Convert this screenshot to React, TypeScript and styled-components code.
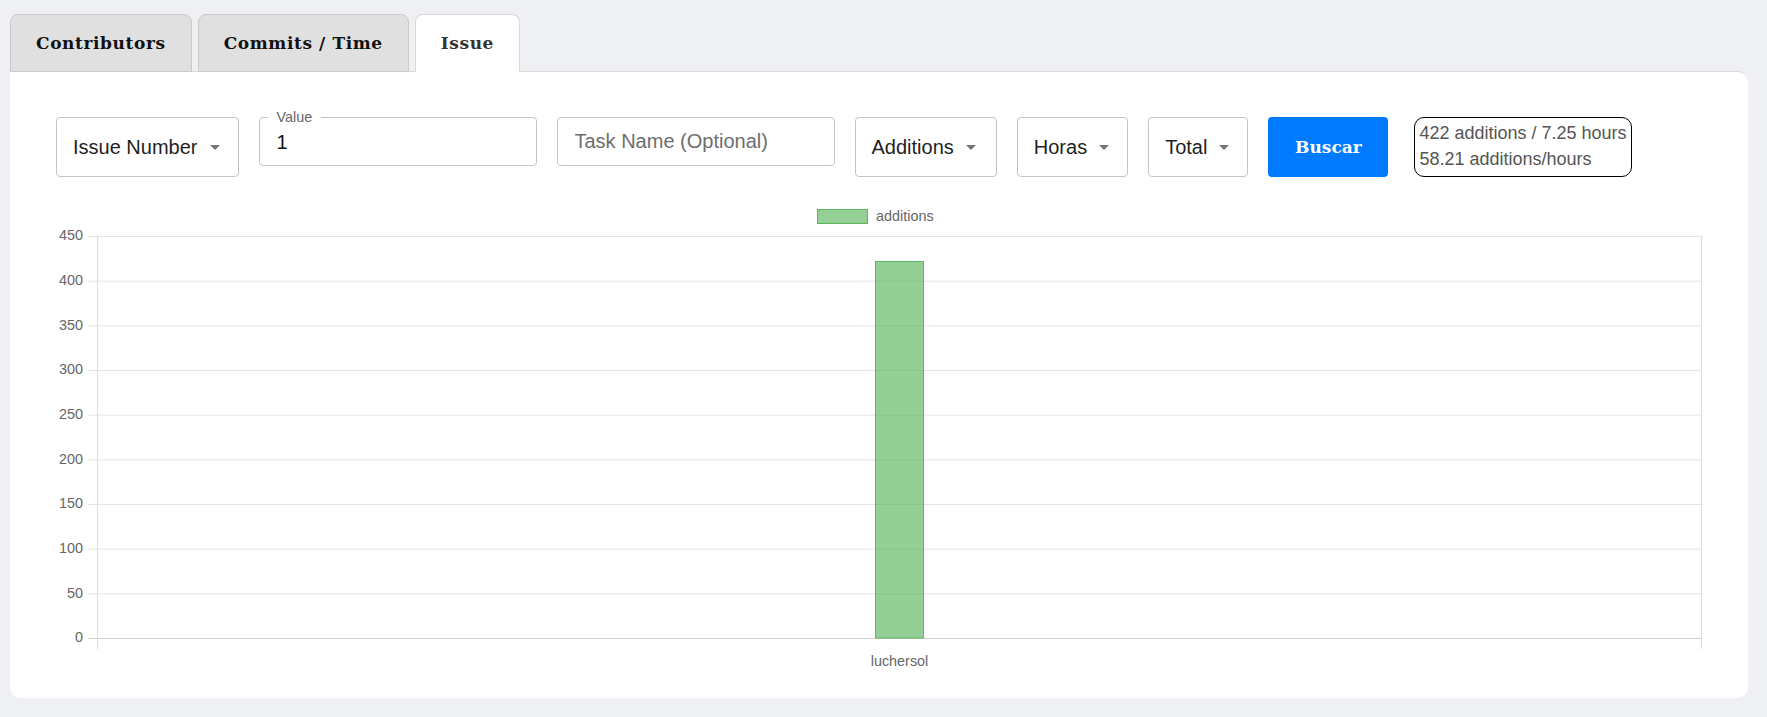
import React from "react";
import styled, { createGlobalStyle, css } from "styled-components";

const GlobalStyle = createGlobalStyle`
  html, body { margin: 0; padding: 0; }
  body {
    background: #eff0f4;
    font-family: "Liberation Sans", Arial, sans-serif;
  }
`;

const Page = styled.div`
  padding: 14px 19px 19px 10px;
`;

const TabList = styled.div`
  display: flex;
  align-items: flex-end;
  gap: 6px;
`;

const Tab = styled.button<{ $active?: boolean }>`
  height: 58px;
  padding: 0 25px;
  margin-bottom: -1px;
  border: 1px solid #c9c9c9;
  border-radius: 8px 8px 0 0;
  background: #e0e0e0;
  color: #111;
  font-family: "DejaVu Serif", "Liberation Serif", serif;
  font-weight: 700;
  font-size: 17px;
  letter-spacing: 0.6px;
  cursor: pointer;
  position: relative;
  ${(p) =>
    p.$active &&
    css`
      background: #fff;
      border-color: #d9d9d9;
      border-bottom-color: #fff;
      color: #333;
      z-index: 1;
    `}
`;

const Card = styled.div`
  background: #fff;
  border-top: 1px solid #d9d9d9;
  border-radius: 0 10px 10px 10px;
  padding: 45px 46px 23px 46px;
`;

const Controls = styled.div`
  display: flex;
  align-items: flex-start;
  gap: 20px;
`;

const SelectBox = styled.div<{ $extra?: number }>`
  height: 60px;
  box-sizing: border-box;
  display: flex;
  align-items: center;
  gap: 12px;
  padding: 0 ${(p) => 18 + (p.$extra ?? 0)}px 0 16px;
  border: 1px solid #c4c4c4;
  border-radius: 4px;
  font-size: 20px;
  color: #1f1f1f;
  white-space: nowrap;
`;

const Arrow = styled.span`
  width: 0;
  height: 0;
  border-left: 5px solid transparent;
  border-right: 5px solid transparent;
  border-top: 5px solid #757575;
`;

const Field = styled.fieldset`
  margin: -7px 0 0 0;
  width: 278px;
  height: 56px;
  box-sizing: border-box;
  padding: 0 17px 5px 17px;
  border: 1px solid #c4c4c4;
  border-radius: 4px;
  display: flex;
  align-items: center;
`;

const FieldLegend = styled.legend`
  margin-left: -9px;
  padding: 0 9px;
  font-size: 14.4px;
  line-height: 14px;
  color: #666;
`;

const TextInput = styled.input`
  box-sizing: border-box;
  border: none;
  outline: none;
  padding: 0;
  margin: 0;
  width: 100%;
  font-family: "Liberation Sans", Arial, sans-serif;
  font-size: 20px;
  color: #111;
  background: transparent;
`;

const PlainInput = styled.input`
  box-sizing: border-box;
  width: 278px;
  height: 49px;
  padding: 0 17px;
  border: 1px solid #c4c4c4;
  border-radius: 4px;
  outline: none;
  font-family: "Liberation Sans", Arial, sans-serif;
  font-size: 20px;
  color: #111;
  &::placeholder {
    color: #6e6e6e;
  }
`;

const SearchButton = styled.button`
  width: 120px;
  height: 60px;
  border: none;
  border-radius: 4px;
  background: #007bff;
  color: #fff;
  font-family: "DejaVu Serif", "Liberation Serif", serif;
  font-weight: 700;
  font-size: 17px;
  cursor: pointer;
`;

const InfoBox = styled.div`
  margin-left: 6px;
  height: 60px;
  box-sizing: border-box;
  padding: 2px 4px 0 4px;
  border: 1px solid #000;
  border-radius: 10px;
  font-size: 18px;
  line-height: 26px;
  color: #555;
  white-space: nowrap;
`;

const ChartWrap = styled.div`
  margin-top: 20px;
  height: 478px;
`;

const Select: React.FC<{ label: string; extra?: number }> = ({ label, extra }) => (
  <SelectBox $extra={extra}>
    <span>{label}</span>
    <Arrow />
  </SelectBox>
);

const W = 1646;
const left = 41;
const top = 39;
const zeroY = 441;
const maxV = 450;
const yOf = (v: number) => zeroY - (v * (zeroY - top)) / maxV;

const BarChart: React.FC = () => {
  const ticks = [0, 50, 100, 150, 200, 250, 300, 350, 400, 450];
  const value = 422;
  const barX = 819;
  const barW = 49;
  const labelFont = "Liberation Sans, Arial, sans-serif";
  return (
    <svg width={W} height={478} viewBox={`0 0 ${W} 478`}>
      <rect x={761.5} y={12.5} width={50} height={14} fill="rgba(76,175,80,0.6)" stroke="#5cb85c" strokeWidth={1} />
      <text x={820} y={24} fontFamily={labelFont} fontSize={14.4} fill="#666">
        additions
      </text>
      {ticks.map((t) => (
        <g key={t}>
          <line
            x1={32}
            x2={W}
            y1={yOf(t) + 0.5}
            y2={yOf(t) + 0.5}
            stroke={t === 0 ? "#cfcfcf" : "#e4e4e4"}
            strokeWidth={1}
          />
          <text
            x={27}
            y={yOf(t) + 0.5}
            textAnchor="end"
            dominantBaseline="middle"
            fontFamily={labelFont}
            fontSize={14.4}
            fill="#666"
          >
            {t}
          </text>
        </g>
      ))}
      <line x1={left + 0.5} x2={left + 0.5} y1={top} y2={452} stroke="#dcdcdc" strokeWidth={1} />
      <line x1={W - 0.5} x2={W - 0.5} y1={top} y2={452} stroke="#dcdcdc" strokeWidth={1} />
      <rect
        x={barX + 0.5}
        y={yOf(value) + 0.5}
        width={barW - 1}
        height={zeroY - yOf(value) - 0.5}
        fill="rgba(76,175,80,0.6)"
        stroke="#5cb85c"
        strokeWidth={1}
      />
      <text
        x={843.5}
        y={465}
        textAnchor="middle"
        dominantBaseline="middle"
        fontFamily={labelFont}
        fontSize={14.4}
        fill="#666"
      >
        luchersol
      </text>
    </svg>
  );
};

export default function App() {
  return (
    <>
      <GlobalStyle />
      <Page>
        <TabList>
          <Tab>Contributors</Tab>
          <Tab>Commits / Time</Tab>
          <Tab $active>Issue</Tab>
        </TabList>
        <Card>
          <Controls>
            <Select label="Issue Number" />
            <Field>
              <FieldLegend>Value</FieldLegend>
              <TextInput defaultValue="1" />
            </Field>
            <PlainInput placeholder="Task Name (Optional)" />
            <Select label="Additions" extra={2} />
            <Select label="Horas" />
            <Select label="Total" />
            <SearchButton>Buscar</SearchButton>
            <InfoBox>
              <div>422 additions / 7.25 hours</div>
              <div>58.21 additions/hours</div>
            </InfoBox>
          </Controls>
          <ChartWrap>
            <BarChart />
          </ChartWrap>
        </Card>
      </Page>
    </>
  );
}
